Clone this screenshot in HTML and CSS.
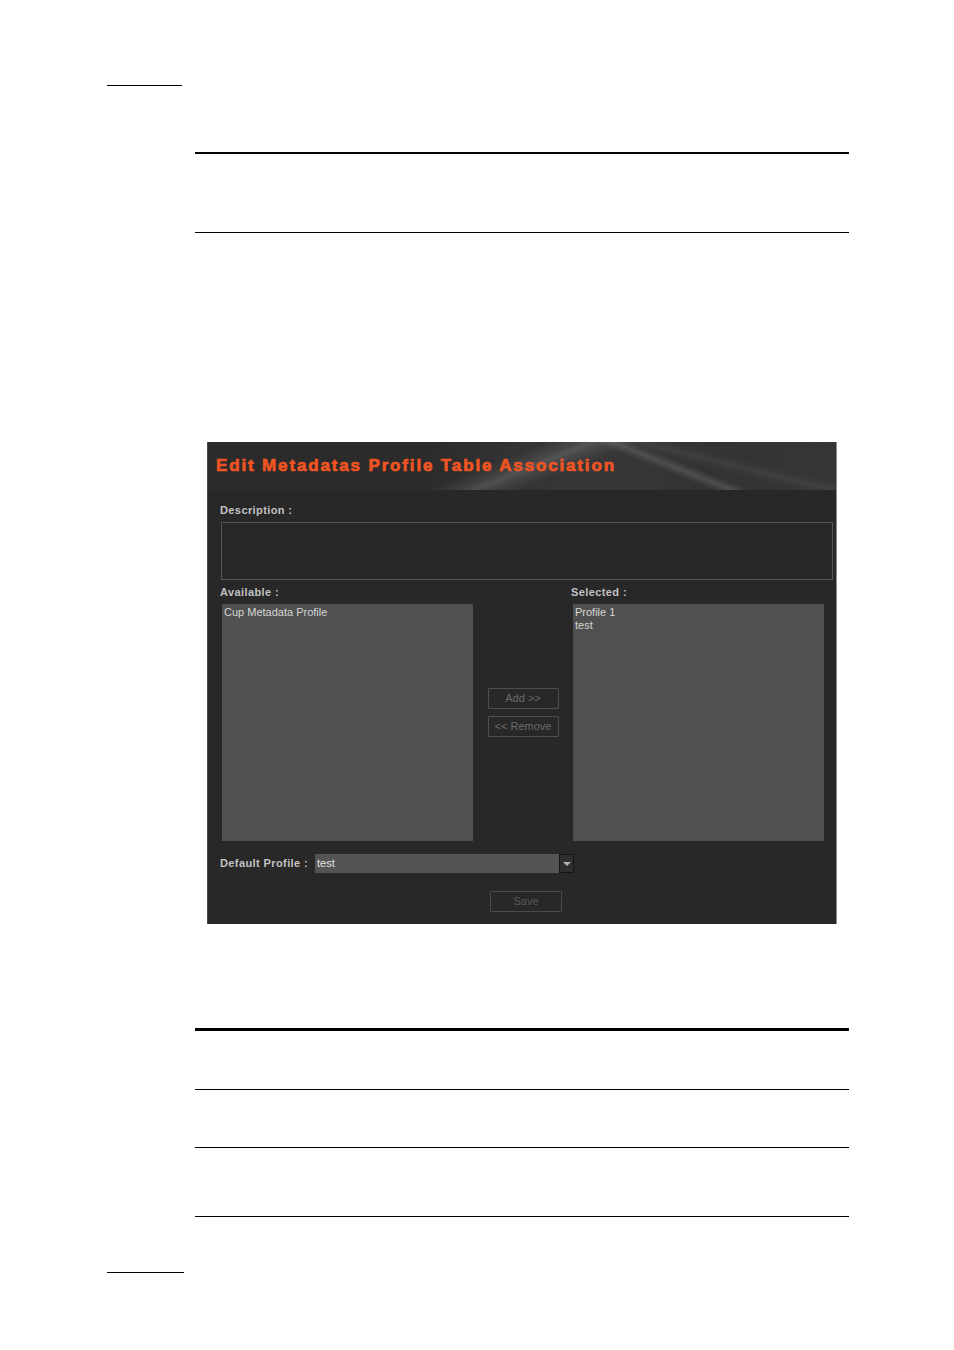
FILE: index.html
```html
<!DOCTYPE html>
<html>
<head>
<meta charset="utf-8">
<link rel="stylesheet" href="styles.css">
</head>
<body>
<div class="page">
  <div class="rule rule-top-short"></div>
  <div class="rule rule-wide rule-2 r1"></div>
  <div class="rule rule-wide rule-1 r2"></div>

  <div class="dialog">
    <div class="dlg-header">
      <h1 class="dlg-title">Edit Metadatas Profile Table Association</h1>
    </div>
    <div class="dlg-body">
      <div class="label lbl-desc">Description :</div>
      <div class="desc-box"></div>
      <div class="cols labels-row">
        <div class="label">Available :</div>
        <div></div>
        <div class="label">Selected :</div>
      </div>
      <div class="cols lists-row">
        <div class="listbox">
          <div class="item">Cup Metadata Profile</div>
        </div>
        <div class="mid">
          <div class="btn">Add &gt;&gt;</div>
          <div class="btn">&lt;&lt; Remove</div>
        </div>
        <div class="listbox">
          <div class="item">Profile 1</div>
          <div class="item">test</div>
        </div>
      </div>
      <div class="default-row">
        <div class="label lbl-default">Default Profile :</div>
        <div class="select">
          <div class="select-value">test</div>
          <div class="select-arrow"><span class="tri"></span></div>
        </div>
      </div>
      <div class="save-row">
        <div class="btn btn-save">Save</div>
      </div>
    </div>
  </div>

  <div class="rule rule-wide rule-3 r3"></div>
  <div class="rule rule-wide rule-1 r4"></div>
  <div class="rule rule-wide rule-1 r5"></div>
  <div class="rule rule-wide rule-1 r6"></div>
  <div class="rule rule-bottom-short"></div>
</div>
</body>
</html>
```

FILE: styles.css
```css
html, body {
  margin: 0;
  padding: 0;
  background: #ffffff;
}
.page {
  width: 954px;
  height: 1350px;
  overflow: hidden;
  display: flow-root;
}
.rule {
  background: #000;
}
.rule-top-short {
  margin-top: 85px;
  margin-left: 107px;
  width: 75px;
  height: 1px;
}
.rule-wide {
  margin-left: 195px;
  width: 654px;
}
.rule-1 { height: 1px; }
.rule-2 { height: 2px; }
.rule-3 { height: 3px; }
.r1 { margin-top: 66px; }
.r2 { margin-top: 78px; }
.r3 { margin-top: 104px; }
.r4 { margin-top: 58px; }
.r5 { margin-top: 57px; }
.r6 { margin-top: 68px; }
.rule-bottom-short {
  margin-top: 55px;
  margin-left: 107px;
  width: 77px;
  height: 1px;
}

/* dialog */
.dialog {
  margin-top: 209px;
  margin-left: 207px;
  width: 630px;
  height: 482px;
  box-sizing: border-box;
  background: #282828;
  border-left: 1px solid #4a4a4a;
  border-right: 1px solid #8c8c8c;
  font-family: "Liberation Sans", Arial, sans-serif;
}
.dlg-header {
  height: 48px;
  box-sizing: border-box;
  padding: 14px 0 0 8px;
  background:
    linear-gradient(158deg, rgba(255,255,255,0) 45%, rgba(255,255,255,0.08) 49.5%, rgba(255,255,255,0.15) 51.5%, rgba(255,255,255,0.07) 54%, rgba(255,255,255,0) 58%),
    linear-gradient(201.8deg, rgba(255,255,255,0) 27.5%, rgba(255,255,255,0.13) 30%, rgba(255,255,255,0) 32.5%),
    linear-gradient(194deg, rgba(255,255,255,0) 20%, rgba(255,255,255,0.05) 24%, rgba(255,255,255,0) 28%),
    linear-gradient(to right, #2b2b2b 0%, #2b2b2b 34%, #333333 48%, #373737 62%, #333333 80%, #363636 100%);
}
.dlg-title {
  margin: 0;
  font-family: "Liberation Sans", Arial, sans-serif;
  font-weight: bold;
  font-size: 17px;
  line-height: 20px;
  letter-spacing: 1.85px;
  color: #f05523;
  -webkit-text-stroke: 0.7px #f05523;
  white-space: nowrap;
}
.dlg-body {
  padding: 0 0 0 12px;
}
.label {
  font-size: 11px;
  line-height: 13px;
  height: 13px;
  font-weight: bold;
  letter-spacing: 0.4px;
  color: #c2c2c2;
  white-space: nowrap;
}
.lbl-desc {
  margin-top: 14px;
}
.desc-box {
  margin-top: 5px;
  margin-left: 1px;
  width: 612px;
  height: 58px;
  box-sizing: border-box;
  border: 1px solid #565656;
}
.cols {
  display: grid;
  grid-template-columns: 251px 100px 251px;
}
.labels-row {
  margin-top: 6px;
  height: 13px;
}
.lists-row {
  margin-top: 5px;
  margin-left: 2px;
  height: 237px;
}
.listbox {
  background: #505050;
  padding: 2px 0 0 2px;
  box-sizing: border-box;
  height: 237px;
}
.item {
  font-size: 11px;
  line-height: 13px;
  color: #d6d6d6;
  white-space: nowrap;
}
.mid {
  display: flex;
  flex-direction: column;
  align-items: center;
  padding-top: 84px;
  gap: 7px;
}
.btn {
  width: 71px;
  height: 21px;
  box-sizing: border-box;
  border: 1px solid #4e4e4e;
  border-radius: 1px;
  color: #6a6a6a;
  font-size: 11px;
  line-height: 19px;
  text-align: center;
  white-space: nowrap;
}
.default-row {
  margin-top: 13px;
  height: 19px;
  display: flex;
  align-items: center;
}
.lbl-default {
  width: 95px;
  line-height: 19px;
  height: 19px;
}
.select {
  display: flex;
  height: 19px;
}
.select-value {
  width: 244px;
  background: #545454;
  color: #e2e2e2;
  font-size: 11px;
  line-height: 19px;
  padding-left: 2px;
  box-sizing: border-box;
}
.select-arrow {
  width: 15px;
  height: 19px;
  box-sizing: border-box;
  background: #2e2e2e;
  border: 1px solid #141414;
  display: flex;
  align-items: center;
  justify-content: center;
}
.tri {
  width: 0;
  height: 0;
  border-left: 4px solid transparent;
  border-right: 4px solid transparent;
  border-top: 4px solid #b4b4b4;
}
.save-row {
  margin-top: 18px;
  padding-left: 270px;
}
.btn-save {
  width: 72px;
  color: #575757;
  border-color: #4a4a4a;
}
```
